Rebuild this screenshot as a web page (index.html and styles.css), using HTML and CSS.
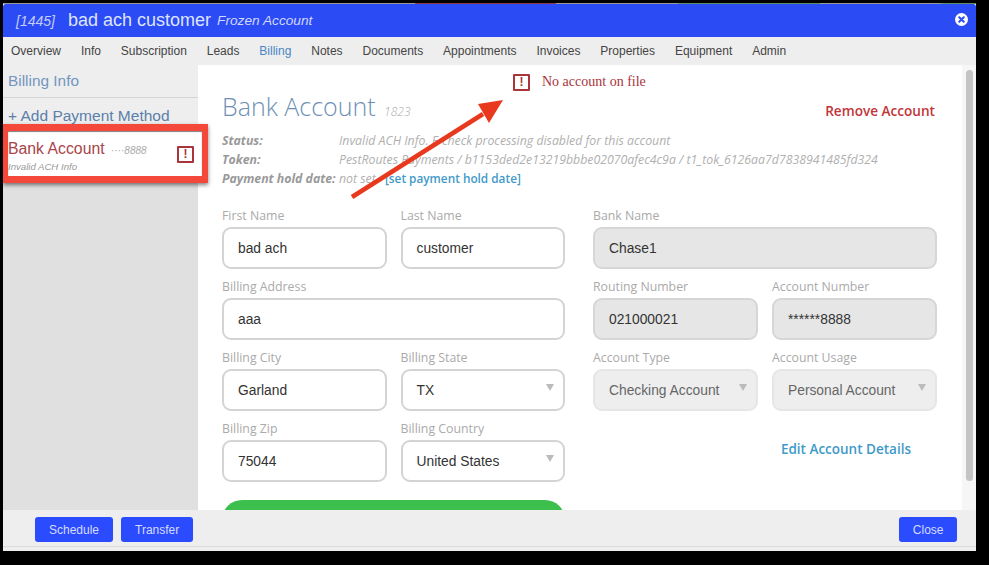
FILE: index.html
```html
<!DOCTYPE html>
<html lang="en">
<head>
    <meta charset="UTF-8">
    <title>Billing - bad ach customer</title>
    <link rel="stylesheet" href="styles.css">
</head>
<body>
    <div class="top-strip"></div>
    <div class="modal">
        <div class="modal-header">
            <span class="cust-id">[1445]</span>
            <span class="cust-name">bad ach customer</span>
            <span class="cust-status">Frozen Account</span>
            <svg class="close-x" width="13" height="13" viewBox="0 0 13 13">
                <circle cx="6.5" cy="6.5" r="6.5" fill="#fff"/>
                <path d="M4.2 4.2l4.6 4.6M8.8 4.2l-4.6 4.6" stroke="#2b4bf5" stroke-width="2" stroke-linecap="round"/>
            </svg>
        </div>
        <div class="tabs">
            <a>Overview</a>
            <a>Info</a>
            <a>Subscription</a>
            <a>Leads</a>
            <a class="active">Billing</a>
            <a>Notes</a>
            <a>Documents</a>
            <a>Appointments</a>
            <a>Invoices</a>
            <a>Properties</a>
            <a>Equipment</a>
            <a>Admin</a>
        </div>
        <div class="modal-body">
            <div class="sidebar">
                <div class="side-title">Billing Info</div>
                <div class="side-add">+ Add Payment Method</div>
                <div class="side-item">
                    <div class="side-text">
                        <div class="side-name">Bank Account <small>····8888</small></div>
                        <div class="side-note">Invalid ACH Info</div>
                    </div>
                    <span class="warn warn-side">!</span>
                </div>
            </div>
            <div class="content">
                <div class="notice"><span class="warn">!</span>No account on file</div>
                <div class="title-row">
                    <h1>Bank Account <small>1823</small></h1>
                    <a class="remove">Remove Account</a>
                </div>
                <div class="meta">
                    <div><b>Status:</b><span>Invalid ACH Info. E-check processing disabled for this account</span></div>
                    <div><b>Token:</b><span>PestRoutes Payments / b1153ded2e13219bbbe02070afec4c9a / t1_tok_6126aa7d7838941485fd324</span></div>
                    <div><b class="hold">Payment hold date:</b><span>not set</span> <a>[set payment hold date]</a></div>
                </div>
                <div class="form">
                    <div class="form-col">
                        <div class="field"><label>First Name</label><div class="input">bad ach</div></div>
                        <div class="field"><label>Last Name</label><div class="input">customer</div></div>
                        <div class="field wide"><label>Billing Address</label><div class="input">aaa</div></div>
                        <div class="field"><label>Billing City</label><div class="input">Garland</div></div>
                        <div class="field"><label>Billing State</label><div class="input select">TX</div></div>
                        <div class="field"><label>Billing Zip</label><div class="input">75044</div></div>
                        <div class="field"><label>Billing Country</label><div class="input select">United States</div></div>
                        <div class="save wide"></div>
                    </div>
                    <div class="form-col">
                        <div class="field wide"><label>Bank Name</label><div class="input locked">Chase1</div></div>
                        <div class="field"><label>Routing Number</label><div class="input locked">021000021</div></div>
                        <div class="field"><label>Account Number</label><div class="input locked">******8888</div></div>
                        <div class="field"><label>Account Type</label><div class="input select disabled">Checking Account</div></div>
                        <div class="field"><label>Account Usage</label><div class="input select disabled">Personal Account</div></div>
                        <a class="edit wide">Edit Account Details</a>
                    </div>
                </div>
            </div>
            <div class="scrollbar"><div class="thumb"></div></div>
        </div>
        <div class="modal-footer">
            <button>Schedule</button>
            <button>Transfer</button>
            <button class="close-btn">Close</button>
        </div>
    </div>

    <!-- annotations drawn over the screenshot -->
    <div class="red-box"></div>
    <svg class="arrow" width="170" height="115" viewBox="0 0 170 115">
        <line x1="4" y1="107" x2="135" y2="24" stroke="#e8391f" stroke-width="4.5"/>
        <polygon points="155,10 130,14 141,33" fill="#e8391f"/>
    </svg>
</body>
</html>
```

FILE: styles.css
```css
html, body {
    height: 100%;
}
body {
    margin: 0;
    background: #000;
    font-family: 'Liberation Sans', Arial, sans-serif;
    overflow: hidden;
}
.top-strip {
    width: 973px;
    height: 1px;
    margin: 3px 0 0 3px;
    background: linear-gradient(90deg, #999 412px, #8a3a4a 412px, #8a3a4a 553px, #999 553px, #999 675px, #5d8f5d 675px, #5d8f5d 817px, #999 817px, #999 938px, #5d8f5d 938px);
}
.modal {
    width: 973px;
    height: 547px;
    margin-left: 3px;
    display: flex;
    flex-direction: column;
    background: #fff;
}
.modal-header {
    height: 33px;
    flex: none;
    display: flex;
    align-items: center;
    padding: 0 8px 0 13px;
    background: #2b4bf5;
    color: #fff;
    border-radius: 3px 3px 0 0;
}
.cust-id {
    font-size: 14px;
    font-style: italic;
    color: #c4cdfb;
    margin-right: 13px;
}
.cust-name {
    font-size: 18px;
    color: #dfe4fd;
    margin-right: 6px;
}
.cust-status {
    font-size: 13.7px;
    font-style: italic;
    color: #d2d9fc;
}
.close-x {
    margin-left: auto;
    margin-top: -3px;
}
.tabs {
    height: 28px;
    flex: none;
    display: flex;
    align-items: center;
    gap: 19.9px;
    padding-left: 8px;
    background: #eee;
    font-size: 12px;
    color: #444;
}
.tabs .active {
    color: #4a86c5;
}
.modal-body {
    flex: 1;
    min-height: 0;
    display: flex;
}
.sidebar {
    width: 195px;
    flex: none;
    background: #e0e0e0;
}
.side-title {
    height: 33px;
    line-height: 31px;
    padding-left: 5px;
    font-size: 15.4px;
    color: #7396c0;
    background: #eee;
    border-bottom: 1px solid #d5d5d5;
    box-sizing: border-box;
}
.side-add {
    height: 33px;
    line-height: 35px;
    padding-left: 5px;
    font-size: 15.5px;
    color: #5b80aa;
    background: #eee;
}
.side-item {
    height: 45px;
    display: flex;
    justify-content: space-between;
    align-items: center;
    padding: 2px 4px 0 5px;
    box-sizing: border-box;
    background: #fff;
}
.side-text {
    margin-top: 3px;
}
.side-name {
    font-size: 15.8px;
    color: #a9444a;
}
.side-name small {
    font-size: 10px;
    font-style: italic;
    color: #aaa;
    margin-left: 2px;
}
.side-note {
    font-size: 9.6px;
    font-style: italic;
    color: #999;
    margin-top: 3px;
}
.warn {
    display: inline-block;
    width: 13px;
    height: 13px;
    border: 2px solid #a9343c;
    border-radius: 1px;
    text-align: center;
    font: bold 12px/13px 'Liberation Sans', sans-serif;
    color: #a9343c;
}
.content {
    flex: 1;
    min-width: 0;
    padding: 0 25px 0 24px;
    overflow: hidden;
}
.notice {
    height: 34px;
    display: flex;
    align-items: center;
    gap: 12px;
    padding-left: 291px;
    font-family: 'Liberation Serif', serif;
    font-size: 14px;
    color: #a9343c;
}
.title-row {
    display: flex;
    justify-content: space-between;
    align-items: center;
    height: 22px;
}
h1 {
    margin: -9px 0 0;
    font-family: 'Open Sans', sans-serif;
    font-size: 25px;
    font-weight: 300;
    color: #6e90b4;
    white-space: nowrap;
}
h1 small {
    margin-left: 2px;
    font-size: 12px;
    font-style: italic;
    color: #aaa;
}
.remove {
    padding-right: 2px;
    font-family: 'Open Sans', sans-serif;
    font-size: 13.6px;
    font-weight: 600;
    color: #c1353a;
}
.meta {
    margin-top: 10px;
    font-family: 'Open Sans', sans-serif;
    font-size: 12.3px;
    font-style: italic;
    line-height: 19px;
    color: #b0b0b0;
    white-space: nowrap;
}
.meta b {
    display: inline-block;
    width: 117px;
    color: #999;
}
.meta a {
    margin-left: 6px;
    font-size: 11.8px;
    font-style: normal;
    font-weight: 600;
    color: #3f9ac9;
}
.form {
    display: grid;
    grid-template-columns: 343px 344px;
    gap: 28px;
    margin-top: 18px;
}
.form-col {
    display: grid;
    grid-template-columns: 1fr 1fr;
    column-gap: 14px;
    align-content: start;
    grid-auto-rows: 71px;
}
.wide {
    grid-column: 1 / -1;
}
.field label {
    display: block;
    height: 21px;
    line-height: 20px;
    font-family: 'Open Sans', sans-serif;
    font-size: 12.3px;
    color: #aaa;
}
.input {
    height: 42px;
    box-sizing: border-box;
    padding-left: 14px;
    line-height: 40px;
    border: 2px solid #d4d4d4;
    border-radius: 9px;
    font-size: 13.8px;
    color: #333;
    background: #fff;
}
.input.locked {
    background: #e6e6e6;
    border-color: #d6d6d6;
}
.input.disabled {
    background: #eee;
    border-color: #e6e6e6;
    color: #666;
}
.select {
    position: relative;
}
.select::after {
    content: "";
    position: absolute;
    right: 9px;
    top: 13px;
    border-left: 4.5px solid transparent;
    border-right: 4.5px solid transparent;
    border-top: 7px solid #bbb;
}
.save {
    height: 40px;
    margin-top: 10px;
    background: #3cbf4d;
    border-radius: 20px;
}
.edit {
    margin-top: 21px;
    text-align: right;
    padding-right: 26px;
    font-family: 'Open Sans', sans-serif;
    font-size: 13.5px;
    font-weight: 600;
    color: #3f9ac9;
}
.scrollbar {
    width: 14px;
    flex: none;
    background: #f6f6f6;
    padding: 5px 3px 0 4px;
    box-sizing: border-box;
}
.thumb {
    height: 411px;
    background: #c4c4c4;
    border-radius: 4px;
}
.modal-footer {
    height: 41px;
    flex: none;
    display: flex;
    align-items: flex-start;
    gap: 8px;
    padding: 7px 19px 0 32px;
    box-sizing: border-box;
    background: linear-gradient(#eee 36px, #dcdcdc 36px, #dcdcdc 37px, #eee 37px);
}
.modal-footer button {
    height: 25px;
    padding: 0 14px;
    border: none;
    border-radius: 3px;
    background: #2b4bff;
    color: #d5dcff;
    font-family: 'Liberation Sans', sans-serif;
    font-size: 12px;
}
.modal-footer .close-btn {
    margin-left: auto;
    padding: 0 13.5px;
}
.red-box {
    position: absolute;
    left: 3px;
    top: 124px;
    width: 194px;
    height: 45px;
    border-style: solid;
    border-color: #f4493a;
    border-width: 7px 6px 7px 5px;
    box-shadow: 0 2px 4px rgba(0, 0, 0, 0.5), inset 0 1px 1px rgba(0, 0, 0, 0.5);
}
.arrow {
    position: absolute;
    left: 348px;
    top: 90px;
}
```
